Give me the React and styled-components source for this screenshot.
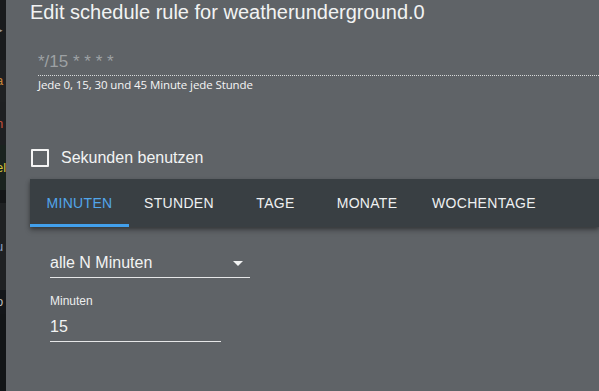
import React from "react";
import styled, { createGlobalStyle } from "styled-components";

const Global = createGlobalStyle`
  html, body { margin: 0; padding: 0; background: #121517; overflow: hidden; }
  body { font-family: "Liberation Sans", Arial, sans-serif; }
  #root { width: 599px; height: 391px; }
`;

const Screen = styled.div`
  display: flex;
  width: 599px;
  height: 391px;
  overflow: hidden;
`;

const Backdrop = styled.div`
  width: 6px;
  flex: none;
  display: flex;
  flex-direction: column;
  overflow: hidden;
`;

const PageRow = styled.div`
  height: ${(p) => p.$h}px;
  flex: none;
  background: ${(p) => p.$bg};
  color: ${(p) => p.$fg || "#aaa"};
  font-size: 13px;
  line-height: ${(p) => p.$h}px;
  white-space: nowrap;
  text-indent: -4px;
  overflow: hidden;
`;

const Dialog = styled.div`
  flex: 1;
  background: #5f6367;
  display: flex;
  flex-direction: column;
  padding-left: 24px;
  min-width: 0;
`;

const Title = styled.h2`
  margin: 1px 0 0;
  font-size: 20px;
  font-weight: 400;
  line-height: 23px;
  color: #f2f3f3;
  white-space: nowrap;
`;

const CronField = styled.div`
  margin: 28px 0 0 8px;
  padding-bottom: 4px;
  border-bottom: 1px dotted #d8dadb;
  font-size: 17px;
  line-height: 19px;
  color: #9da1a4;
`;

const Helper = styled.div`
  margin: 2px 0 0 8px;
  font-family: "Open Sans", "Noto Sans", sans-serif;
  font-size: 11.5px;
  line-height: 14px;
  letter-spacing: -0.1px;
  color: #f5f5f5;
`;

const CheckRow = styled.label`
  display: flex;
  align-items: center;
  gap: 12px;
  margin: 56px 0 0 1px;
  height: 20px;
  font-size: 16px;
  color: #f2f3f3;
`;

const Box = styled.span`
  width: 14px;
  height: 14px;
  border: 2px solid #f4f4f4;
  border-radius: 1px;
  flex: none;
`;

const TabBar = styled.div`
  margin-top: 11px;
  height: 48px;
  background: #393f43;
  display: flex;
  box-shadow: 0 2px 4px rgba(0, 0, 0, 0.35), 0 4px 6px rgba(0, 0, 0, 0.15);
`;

const Tab = styled.div`
  position: relative;
  width: ${(p) => p.$w}px;
  flex: none;
  display: flex;
  align-items: center;
  justify-content: center;
  font-size: 14px;
  letter-spacing: 0.3px;
  color: ${(p) => (p.$active ? "#52a6ea" : "#eef0f1")};

  &::after {
    content: "";
    display: ${(p) => (p.$active ? "block" : "none")};
    position: absolute;
    left: 0;
    right: 0;
    bottom: 0;
    height: 3px;
    background: #42a0ec;
  }
`;

const Field = styled.div`
  margin-left: 20px;
  width: ${(p) => p.$w}px;
  display: flex;
  flex-direction: column;
`;

const SelectBox = styled.div`
  margin-top: 26px;
  height: 24px;
  display: flex;
  align-items: flex-start;
  justify-content: space-between;
  border-bottom: 1px solid #e6e7e8;
  font-size: 16px;
  line-height: 19px;
  color: #f2f3f3;
`;

const Arrow = styled.svg`
  margin: 8px 7px 0 0;
`;

const Label = styled.div`
  margin-top: 16px;
  font-size: 12px;
  line-height: 14px;
  color: #eceeee;
`;

const NumberInput = styled.div`
  margin-top: 9px;
  height: 24px;
  border-bottom: 1px solid #e6e7e8;
  font-size: 16px;
  line-height: 20px;
  color: #f2f3f3;
`;

const rows = [
  { h: 60, bg: "#191b1d", t: "▸", fg: "#9a9a9a" },
  { h: 42, bg: "#1f2123", t: "a", fg: "#c8873a" },
  { h: 43, bg: "#1e2022", t: "h", fg: "#c0503a" },
  { h: 45, bg: "#1a231f", t: "el", fg: "#d2c23c" },
  { h: 13, bg: "#141618" },
  { h: 87, bg: "#1f2123", t: "u", fg: "#8aa0c8" },
  { h: 24, bg: "#131619", t: "o", fg: "#b9b9b9" },
  { h: 77, bg: "#121517" },
];

const tabs = [
  { label: "MINUTEN", w: 99 },
  { label: "STUNDEN", w: 100 },
  { label: "TAGE", w: 93 },
  { label: "MONATE", w: 90 },
  { label: "WOCHENTAGE", w: 144 },
];

export default function App() {
  return (
    <>
      <Global />
      <Screen>
        <Backdrop>
          {rows.map((r, i) => (
            <PageRow key={i} $h={r.h} $bg={r.bg} $fg={r.fg}>
              {r.t || ""}
            </PageRow>
          ))}
        </Backdrop>
        <Dialog>
          <Title>Edit schedule rule for weatherunderground.0</Title>
          <CronField>*/15 * * * *</CronField>
          <Helper>Jede 0, 15, 30 und 45 Minute jede Stunde</Helper>
          <CheckRow>
            <Box />
            Sekunden benutzen
          </CheckRow>
          <TabBar>
            {tabs.map((t, i) => (
              <Tab key={t.label} $w={t.w} $active={i === 0}>
                {t.label}
              </Tab>
            ))}
          </TabBar>
          <Field $w={200}>
            <SelectBox>
              alle N Minuten
              <Arrow width="10" height="5" viewBox="0 0 10 5">
                <path d="M0 0 L10 0 L5 5 Z" fill="#f2f3f3" />
              </Arrow>
            </SelectBox>
          </Field>
          <Field $w={171}>
            <Label>Minuten</Label>
            <NumberInput>15</NumberInput>
          </Field>
        </Dialog>
      </Screen>
    </>
  );
}
